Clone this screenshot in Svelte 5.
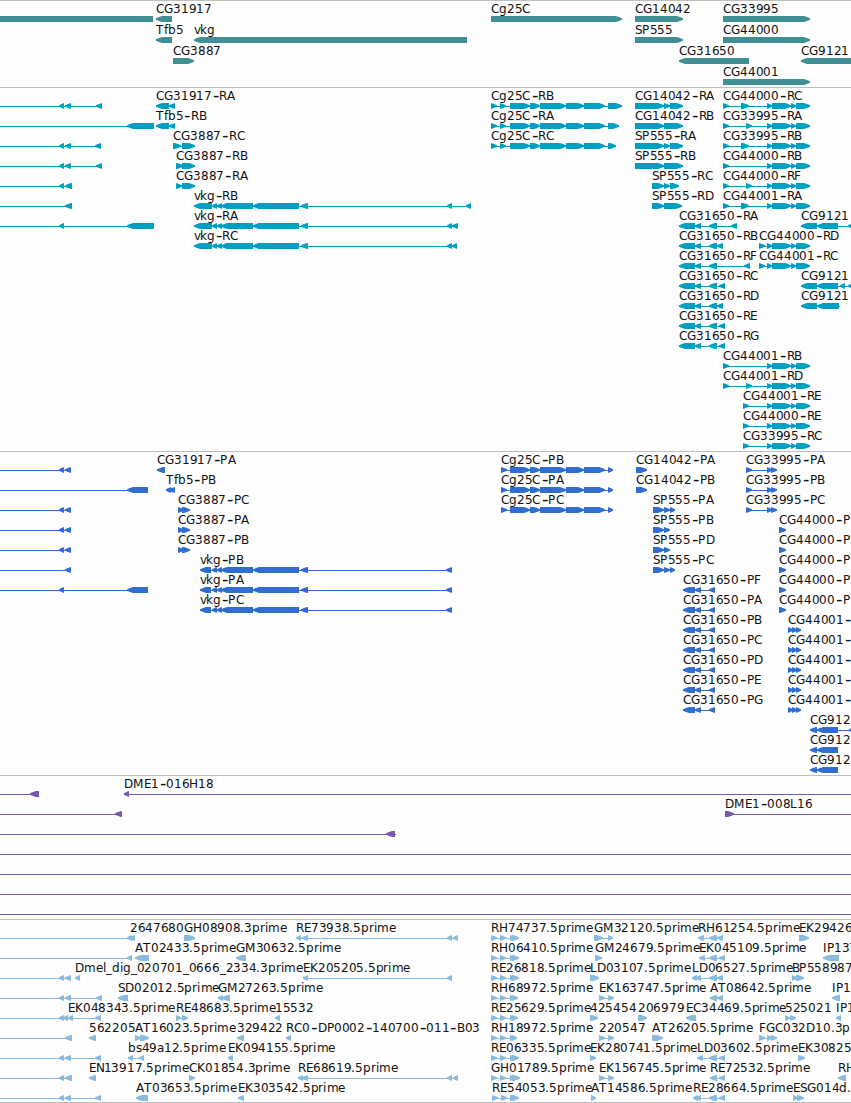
<script lang="ts">
	type Block = [number, number];
	type Feature = { row: number; label: string; dir: 'l' | 'r'; blocks: Block[]; from: number; to: number; at: number };
	type Track = { name: string; color: string; pitch: number; height: number; features: Feature[] };

	const WIDTH = 851;
	const FONT_ADVANCE: Record<string, number> = {
		A: 8.3, B: 7.4, C: 8.3, D: 9, E: 7, F: 6.8, G: 8.9, H: 9, I: 3.6, K: 7.8, L: 6.6, M: 10.8,
		P: 7.2, R: 7.8, S: 7.3, T: 7.6, a: 7, b: 7.6, d: 7.6, e: 7.2, f: 4.4, g: 7.6, i: 3.3, k: 6.6,
		l: 3.3, m: 11.6, p: 7.7, r: 5.1, s: 6, v: 6.4, '.': 4, '-': 7.8, _: 6
	};

	// x position of every glyph in a label
	function glyphs(label: string, x: number) {
		const out: number[] = [];
		for (const ch of label) {
			out.push(Math.round(x) + (ch === '-' ? 1 : 0));
			x += FONT_ADVANCE[ch] ?? 7.7;
		}
		return out.join(' ');
	}

	// hyphens are set larger, so they sit one pixel lower
	const heights = (label: string, y: number) => [...label].map((ch) => (ch === '-' ? y + 1 : y)).join(' ');

	function f(row: number, label: string, dir: 'l' | 'r', blocks: Block[], from?: number, to?: number): Feature {
		const at = blocks.length ? blocks[0][0] : 0;
		return { row, label, dir, blocks, at, from: from ?? at, to: to ?? (blocks.length ? blocks[blocks.length - 1][1] : WIDTH) };
	}

	// unlabelled feature that runs in from the left edge
	const left = (row: number, ...blocks: Block[]) => f(row, '', 'l', blocks, 0);

	function shape([a, b]: Block, dir: string, y: number) {
		const tip = Math.min(6, b - a);
		const [nose, mid, base, tail] = dir === 'l' ? [a, a + tip / 2, a + tip, b] : [b, b - tip / 2, b - tip, a];
		return [
			[nose, y + 2.3], [mid, y + 1], [base, y], [tail, y],
			[tail, y + 6], [base, y + 6], [mid, y + 5], [nose, y + 3.7]
		].join(' ');
	}

	const d1: Block = [59, 64];
	const d2: Block = [65, 71];

	const vkg: Block[] = [[212, 217], [217, 222], [221, 253], [253, 299], [301, 308]];
	const cg25: Block[] = [[510, 530], [530, 540], [540, 566], [566, 584], [584, 605]];
	const cg44: Block[] = [[767, 772], [772, 791], [791, 796], [796, 810]];
	const cg31: Block[] = [[679, 695], [695, 701], [709, 717]];
	const sp3 = (a: number, b: number): Block[] => [[a, 664], [664, 670], [670, b]];
	const sp2 = (a: number, b: number): Block[] => [[a, 664], [664, b]];

	const genes: Feature[] = [
		f(0, 'CG31917', 'l', [[156, 172]]),
		f(0, 'Cg25C', 'r', [[491, 622]]),
		f(0, 'CG14042', 'r', [[635, 683]]),
		f(0, 'CG33995', 'r', [[723, 810]]),
		f(0, '', 'l', [[-20, 153]]),
		f(1, 'Tfb5', 'l', [[156, 172]]),
		f(1, 'vkg', 'l', [[194, 467]]),
		f(1, 'SP555', 'r', [[635, 683]]),
		f(1, 'CG44000', 'r', [[723, 810]]),
		f(2, 'CG3887', 'r', [[173, 194]]),
		f(2, 'CG31650', 'l', [[679, 749]]),
		f(2, 'CG9121', 'l', [[801, 870]]),
		f(3, 'CG44001', 'r', [[723, 810]])
	];

	const transcripts: Feature[] = [
		left(0, d1, d2, [96, 102]),
		left(1, [127, 154]),
		left(2, d1, d2, [95, 101]),
		left(3, d1, d2, [96, 102]),
		left(4, d1, [65, 72]),
		left(5, [65, 72]),
		left(6, d1, [127, 154]),
		f(0, 'CG31917-RA', 'l', [[156, 169], [169, 175]]),
		f(1, 'Tfb5-RB', 'l', [[156, 169], [169, 175]]),
		f(2, 'CG3887-RC', 'r', [[173, 181], [182, 195]]),
		f(3, 'CG3887-RB', 'r', [[176, 183], [182, 195]]),
		f(4, 'CG3887-RA', 'r', [[176, 182], [182, 195]]),
		f(5, 'vkg-RB', 'l', [[194, 212], ...vkg, [447, 452], [466, 471]]),
		f(6, 'vkg-RA', 'l', [[194, 212], ...vkg, [447, 452], [452, 458]]),
		f(7, 'vkg-RC', 'l', [[194, 212], ...vkg, [447, 452], [452, 457]]),
		f(0, 'Cg25C-RB', 'r', [[491, 497], [500, 506], ...cg25, [608, 622]]),
		f(1, 'Cg25C-RA', 'r', [[491, 497], [500, 506], ...cg25, [608, 619]]),
		f(2, 'Cg25C-RC', 'r', [[491, 497], [500, 506], ...cg25, [608, 616]]),
		f(0, 'CG14042-RA', 'r', sp3(635, 683)),
		f(1, 'CG14042-RB', 'r', sp2(635, 683)),
		f(2, 'SP555-RA', 'r', sp3(635, 683)),
		f(3, 'SP555-RB', 'r', sp2(635, 683)),
		f(4, 'SP555-RC', 'r', sp3(652, 679)),
		f(5, 'SP555-RD', 'r', sp2(652, 682)),
		f(0, 'CG44000-RC', 'r', [[723, 729], [741, 749], ...cg44]),
		f(1, 'CG33995-RA', 'r', [[723, 729], [746, 752], ...cg44]),
		f(2, 'CG33995-RB', 'r', [[723, 729], [741, 749], ...cg44]),
		f(3, 'CG44000-RB', 'r', [[723, 729], ...cg44]),
		f(4, 'CG44000-RF', 'r', [[723, 729], [746, 752], ...cg44]),
		f(5, 'CG44001-RA', 'r', [[723, 729], [741, 749], ...cg44]),
		f(6, 'CG31650-RA', 'l', [...cg31, [731, 737]]),
		f(7, 'CG31650-RB', 'l', [...cg31, [717, 723]]),
		f(8, 'CG31650-RF', 'l', [...cg31, [744, 750]]),
		f(9, 'CG31650-RC', 'l', [...cg31, [719, 725]]),
		f(10, 'CG31650-RD', 'l', [...cg31, [717, 723]]),
		f(11, 'CG31650-RE', 'l', [...cg31, [719, 725]]),
		f(12, 'CG31650-RG', 'l', [...cg31, [719, 725]]),
		f(7, 'CG44000-RD', 'r', [[759, 765], ...cg44]),
		f(8, 'CG44001-RC', 'r', [[759, 765], ...cg44]),
		f(6, 'CG9121', 'l', [[801, 817], [817, 838], [848, 854]]),
		f(9, 'CG9121', 'l', [[801, 817], [817, 838], [840, 845], [848, 854]]),
		f(10, 'CG9121', 'l', [[801, 817], [817, 839]], 801, 840),
		f(13, 'CG44001-RB', 'r', [[723, 729], ...cg44]),
		f(14, 'CG44001-RD', 'r', [[723, 729], [746, 752], ...cg44]),
		f(15, 'CG44001-RE', 'r', [[743, 749], ...cg44]),
		f(16, 'CG44000-RE', 'r', [[743, 749], ...cg44]),
		f(17, 'CG33995-RC', 'r', [[743, 749], ...cg44])
	];

	const proteins: Feature[] = [
		left(0, d1, d2),
		left(1, [127, 148]),
		left(2, d1, d2),
		left(3, d1, d2),
		left(4, d1, d2),
		left(5, [65, 71]),
		left(6, d1, [127, 148]),
		f(0, 'CG31917-PA', 'l', [[157, 165]]),
		f(1, 'Tfb5-PB', 'l', [[166, 171], [169, 175]]),
		...['PC', 'PA', 'PB'].map((s, i) => f(2 + i, `CG3887-${s}`, 'r', [[178, 184], [182, 190]])),
		...['PB', 'PA', 'PC'].map((s, i) => f(5 + i, `vkg-${s}`, 'l', [[200, 211], ...vkg, [446, 452]])),
		...['PB', 'PA', 'PC'].map((s, i) => f(i, `Cg25C-${s}`, 'r', [[501, 507], ...cg25, [608, 613]])),
		f(0, 'CG14042-PA', 'r', [[636, 647]]),
		f(1, 'CG14042-PB', 'r', [[636, 647]]),
		f(2, 'SP555-PA', 'r', sp3(653, 675)),
		f(3, 'SP555-PB', 'r', sp2(653, 670)),
		f(4, 'SP555-PD', 'r', sp2(653, 670)),
		f(5, 'SP555-PC', 'r', sp3(653, 675)),
		...['PF', 'PA', 'PB', 'PC', 'PD', 'PE', 'PG'].map((s, i) =>
			f(6 + i, `CG31650-${s}`, 'l', [[683, 695], [695, 701], [709, 715]])
		),
		...['PA', 'PB', 'PC'].map((s, i) => f(i, `CG33995-${s}`, 'r', [[746, 752], [767, 772], [771, 777]])),
		...[3, 4, 5, 6, 7].map((r) => f(r, 'CG44000-P', 'r', [[779, 786]])),
		...[8, 9, 10, 11, 12].map((r) => f(r, 'CG44001-', 'r', [[788, 793], [792, 797], [796, 801]])),
		f(13, 'CG912', 'l', [[810, 817], [817, 838], [849, 854]]),
		f(14, 'CG912', 'l', [[810, 817], [817, 838]]),
		f(15, 'CG912', 'l', [[810, 817], [817, 838]])
	];

	const clones: Feature[] = [
		left(0, [30, 39]),
		f(0, 'DME1-016H18', 'l', [[124, 129]], 124, WIDTH),
		left(1, [115, 122]),
		f(1, 'DME1-008L16', 'r', [[725, 734]], 725, WIDTH),
		f(2, '', 'l', [[386, 395]], 0, 396),
		...[3, 4, 5, 6].map((r) => left(r))
	];

	const rh = (end: number): Block[] => [[491, 497], [500, 506], [510, 516], [512, end]];

	const ests: Feature[] = [
		left(0, [127, 132]),
		f(0, '2647680', 'l', [[130, 135]]),
		f(0, 'GH08908.3prime', 'r', [[184, 195]]),
		f(0, 'RE73938.5prime', 'l', [[296, 301], [302, 308], [447, 452], [453, 458]]),
		f(0, 'RH74737.5prime', 'r', rh(519)),
		f(0, 'GM32120.5prime', 'r', [[594, 603], [608, 613]]),
		f(0, 'RH61254.5prime', 'l', [[698, 704], [709, 717], [717, 723]]),
		f(0, 'EK29426', 'r', [[799, 809]]),
		left(1, [127, 132]),
		f(1, 'AT02433.5prime', 'l', [[135, 149]]),
		f(1, 'GM30632.5prime', 'l', [[236, 246]]),
		f(1, 'RH06410.5prime', 'r', rh(519)),
		f(1, 'GM24679.5prime', 'r', [[595, 602]]),
		f(1, 'EK045109.5prime', 'l', [[699, 705], [709, 717], [719, 725]]),
		f(1, 'IP137', 'l', [[823, 839]]),
		left(2, d1, d2),
		f(2, 'Dmel_dig_020701_0666_2334.3prime', 'l', [[75, 80]]),
		f(2, 'EK205205.5prime', 'l', [[303, 308], [447, 452]]),
		f(2, 'RE26818.5prime', 'r', rh(519)),
		f(2, 'LD03107.5prime', 'r', [[590, 599]]),
		f(2, 'LD06527.5prime', 'l', [[692, 697], [696, 701], [709, 717], [717, 723]]),
		f(2, 'BP558987', 'r', [[792, 797], [796, 804]]),
		left(3, d1, d2, [96, 102]),
		f(3, 'SD02012.5prime', 'l', [[118, 128]]),
		f(3, 'GM27263.5prime', 'l', [[218, 223], [222, 230]]),
		f(3, 'RH68972.5prime', 'r', rh(518)),
		f(3, 'EK163747.5prime', 'r', [[599, 605], [608, 614]]),
		f(3, 'AT08642.5prime', 'l', [[710, 717], [717, 723]]),
		f(3, 'IP1', 'l', [[832, 840]]),
		left(4, d1, [63, 68]),
		f(4, 'EK048343.5prime', 'l', [[68, 73], [95, 101]]),
		f(4, 'RE48683.5prime', 'r', [[176, 181], [182, 188]]),
		f(4, '15532', 'l', [[275, 280]]),
		f(4, 'RE25629.5prime', 'r', rh(518)),
		f(4, '425454', 'r', [[590, 598]]),
		f(4, '206979', 'r', [[638, 647]]),
		f(4, 'EC34469.5prime', 'l', [[686, 696]]),
		f(4, '525021', 'r', [[785, 790], [790, 796]]),
		f(4, 'IP1', 'l', [[836, 841]]),
		left(5, [65, 72]),
		f(5, '562205', 'l', [[89, 96]]),
		f(5, 'AT16023.5prime', 'r', [[135, 141], [140, 149]]),
		f(5, '329422', 'l', [[237, 244]]),
		f(5, 'RC0-DP0002-140700-011-B03', 'l', [[286, 291]]),
		f(5, 'RH18972.5prime', 'r', rh(517)),
		f(5, '220547', 'r', [[599, 605], [608, 614]]),
		f(5, 'AT26205.5prime', 'r', [[652, 663]]),
		f(5, 'FGC032D10.3p', 'r', [[759, 765], [767, 772], [771, 777]]),
		left(6, d1, d2, [95, 101]),
		f(6, 'bs49a12.5prime', 'l', [[128, 133], [139, 144]]),
		f(6, 'EK094155.5prime', 'l', [[228, 233]]),
		f(6, 'RE06335.5prime', 'r', rh(519)),
		f(6, 'EK280741.5prime', 'r', [[590, 596]]),
		f(6, 'LD03602.5prime', 'l', [[697, 703], [709, 717], [719, 725]]),
		f(6, 'EK30825', 'r', [[798, 805]]),
		left(7, d1, [65, 72]),
		f(7, 'EN13917.5prime', 'l', [[89, 96]]),
		f(7, 'CK01854.3prime', 'r', [[189, 195]]),
		f(7, 'RE68619.5prime', 'l', [[298, 303], [302, 308], [447, 452], [453, 458]]),
		f(7, 'GH01789.5prime', 'r', rh(520)),
		f(7, 'EK156745.5prime', 'r', [[599, 605], [608, 614]]),
		f(7, 'RE72532.5prime', 'l', [[710, 717], [719, 725]]),
		f(7, 'RH', 'l', [[838, 846]]),
		left(8, d1, d2, [95, 101]),
		f(8, 'AT03653.5prime', 'l', [[136, 148]]),
		f(8, 'EK303542.5prime', 'l', [[238, 244]]),
		f(8, 'RE54053.5prime', 'r', [[492, 498], [501, 507], [510, 519]]),
		f(8, 'AT14586.5prime', 'r', [[591, 596]]),
		f(8, 'RE28664.5prime', 'l', [[693, 698], [696, 701], [709, 717], [719, 725]]),
		f(8, 'ESG014d.', 'r', [[793, 798], [797, 804]])
	];

	const tracks: Track[] = [
		{ name: 'genes', color: '#408f94', pitch: 21, height: 87, features: genes },
		{ name: 'transcripts', color: '#009ec1', pitch: 20, height: 364, features: transcripts },
		{ name: 'proteins', color: '#316dce', pitch: 20, height: 324, features: proteins },
		{ name: 'clones', color: '#775aa9', pitch: 20, height: 144, features: clones },
		{ name: 'ests', color: '#88bbde', pitch: 20, height: 183, features: ests }
	];
</script>

<main class="browser">
	{#each tracks as track (track.name)}
		<section class="track" style:height="{track.height}px">
			<svg width={WIDTH} height={track.height - 1} style:color={track.color}>
				{#each track.features as ft}
					{@const y = ft.row * track.pitch}
					<rect x={ft.from} y={y + 18} width={ft.to - ft.from} height="1" />
					{#each ft.blocks as b}
						<polygon points={shape(b, ft.dir, y + 15)} />
					{/each}
				{/each}
				{#each track.features.filter((ft) => ft.label) as ft}
					<text x={glyphs(ft.label, ft.at)} y={heights(ft.label, ft.row * track.pitch + 12)}
						>{#each ft.label.split(/(-)/) as part}{#if part === '-'}<tspan class="hyphen">-</tspan>{:else}{part}{/if}{/each}</text
					>
				{/each}
			</svg>
		</section>
	{/each}
</main>

<style>
	:global(body) {
		margin: 0;
		background: #fefefe;
	}
	.browser {
		display: flex;
		flex-direction: column;
		width: 851px;
		overflow: hidden;
		border-bottom: 1px solid #bebebe;
	}
	.track {
		box-sizing: border-box;
		border-top: 1px solid #bebebe;
	}
	svg {
		display: block;
		overflow: hidden;
	}
	rect,
	polygon {
		fill: currentColor;
	}
	rect {
		shape-rendering: crispEdges;
	}
	text {
		font-family: 'DejaVu Sans', sans-serif;
		font-size: 12px;
		fill: #111;
	}
	.hyphen {
		font-size: 18px;
	}
</style>
